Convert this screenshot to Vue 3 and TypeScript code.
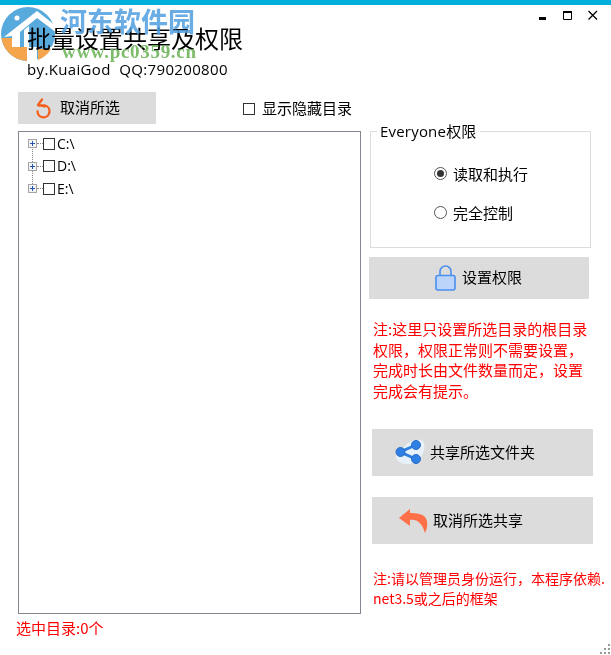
<template>
  <div class="window">
    <div class="accent"></div>

    <header class="head">
      <div class="titles">
        <h1>批量设置共享及权限</h1>
        <p>by.KuaiGod&nbsp; QQ:790200800</p>
      </div>
      <div class="controls">
        <svg width="12" height="12" viewBox="0 0 12 12"><rect x="2" y="8" width="7" height="3" fill="#000" /></svg>
        <svg width="12" height="12" viewBox="0 0 12 12"><path d="M1.500 2.500h8v8h-8z" fill="none" stroke="#000" /><rect x="1" y="2" width="9" height="2" fill="#000" /></svg>
        <svg width="12" height="12" viewBox="0 0 12 12"><path d="M1.500 2l8.500 8.500M10 2l-8.500 8.500" fill="none" stroke="#000" stroke-width="1.300" /></svg>
      </div>
    </header>

    <div class="toolbar">
      <button class="btn btn-top">
        <svg width="16" height="21" viewBox="0 0 16 21">
          <path d="M6 1.500L2 7l6.500 1.500M2.500 7.500H9a6 6 0 1 1-7.500 5.800" fill="none" stroke="#f4601c" stroke-width="2.300" stroke-linecap="round" stroke-linejoin="round" />
        </svg>
        <span>取消所选</span>
      </button>
      <label class="hidden-dirs"><span class="box"></span><span class="hidden-text">显示隐藏目录</span></label>
    </div>

    <main class="body">
      <section class="tree">
        <span class="vline"></span>
        <div v-for="d in drives" :key="d" class="node">
          <span class="plus"></span>
          <span class="dots"></span>
          <span class="box"></span>
          <span class="drive">{{ d }}</span>
        </div>
      </section>

      <aside class="side">
        <fieldset class="group">
          <legend>Everyone权限</legend>
          <div class="radios">
            <label class="radio"><span class="dot on"></span>读取和执行</label>
            <label class="radio"><span class="dot"></span>完全控制</label>
          </div>
        </fieldset>

        <button class="btn btn-perm">
          <svg width="21" height="26" viewBox="0 0 21 26">
            <path d="M5 11V6.500a5.500 5.500 0 0 1 11 0V11" fill="none" stroke="#4a8ef0" stroke-width="1.600" />
            <rect x="1" y="10.500" width="19" height="14.500" rx="2" fill="#bcd4fa" stroke="#4a8ef0" stroke-width="1.600" />
          </svg>
          <span>设置权限</span>
        </button>

        <p class="note note-a">注:这里只设置所选目录的根目录权限，权限正常则不需要设置，完成时长由文件数量而定，设置完成会有提示。</p>

        <button class="btn btn-share">
          <svg width="30" height="27" viewBox="0 0 30 27">
            <path d="M1 19C0 14 6 12 10 7c4-5 14-8 18-5 3 4 1 12-2 16-4 5-11 8-17 7-4-1-7-3-8-6z" fill="#e6f1fa" />
            <path d="M21 6L5 13l16 7" fill="none" stroke="#2f7fe0" stroke-width="3" />
            <circle cx="21" cy="6" r="4.500" fill="#2f80e4" stroke="#2a6cc4" />
            <circle cx="5.500" cy="13" r="4.500" fill="#2f80e4" stroke="#2a6cc4" />
            <circle cx="21" cy="20" r="4.500" fill="#2f80e4" stroke="#2a6cc4" />
          </svg>
          <span>共享所选文件夹</span>
        </button>

        <button class="btn btn-unshare">
          <svg width="29" height="24" viewBox="0 0 29 24">
            <path d="M11 0L0 9l11 8v-6c7-1 12 3 15 13 3-6 3-12 0-16-3-3-8-4-15-4z" fill="#ff7048" />
          </svg>
          <span>取消所选共享</span>
        </button>

        <p class="note note-b">注:请以管理员身份运行，本程序依赖.<br />net3.5或之后的框架</p>
      </aside>
    </main>

    <footer class="status">选中目录:0个</footer>
    <svg class="grip" width="12" height="12" viewBox="0 0 12 12" fill="#9a9a9a">
      <rect x="9" y="1" width="2" height="2" /><rect x="5" y="5" width="2" height="2" /><rect x="9" y="5" width="2" height="2" />
      <rect x="1" y="9" width="2" height="2" /><rect x="5" y="9" width="2" height="2" /><rect x="9" y="9" width="2" height="2" />
    </svg>

    <!-- watermark over the title -->
    <div class="mark">
      <svg class="mark-logo" width="62" height="64" viewBox="0 0 62 64">
        <circle cx="28" cy="34" r="27" fill="#58a9dc" />
        <path d="M27 47h10v16H27zM50 47h12v16H37v-3h13z" fill="#fff" />
        <path d="M1.500 38H14v9h13v14A27 27 0 0 1 1.500 38zM38 60V49h13a27 27 0 0 1-13 11z" fill="#f5a64d" />
        <path d="M4 37L37 11l24 19-4 3-20-15-17 14v15h-8V36z" fill="#fff" />
        <path d="M24 30l5-4v21h-5z" fill="#fff" />
        <circle cx="17" cy="18" r="2.500" fill="#fff" />
      </svg>
      <span class="mark-name">河东软件园</span>
      <span class="mark-url">www.pc0359.cn</span>
    </div>
  </div>
</template>

<script setup lang="ts">
const drives: string[] = ['C:\\', 'D:\\', 'E:\\']
</script>

<style>
html, body {
  margin: 0;
  background: #fff;
}
</style>

<style scoped>
.window {
  position: relative;
  width: 611px;
  height: 655px;
  overflow: hidden;
  background: #fff;
  color: #000;
  font-family: "Noto Sans CJK SC", "Noto Sans", sans-serif;
  font-size: 15px;
}

.accent {
  height: 5px;
  background: #00aedb;
}

.head {
  display: flex;
  justify-content: space-between;
  height: 87px;
}

.titles {
  padding: 16px 0 0 27px;
}

h1 {
  margin: 0;
  font-size: 24px;
  font-weight: 400;
  line-height: 34px;
}

.titles p {
  margin: 5px 0 0;
  font-family: "Open Sans", "Noto Sans CJK SC", sans-serif;
  font-size: 15px;
  letter-spacing: 0.35px;
  line-height: 19px;
}

.controls {
  display: flex;
  gap: 13px;
  padding: 4px 12px 0 0;
  height: 12px;
}

.toolbar {
  display: flex;
  align-items: center;
  height: 32px;
  padding-left: 18px;
}

.btn {
  display: flex;
  align-items: center;
  flex-shrink: 0;
  border: 0;
  padding: 0;
  background: #dcdcdc;
  color: #000;
  font: inherit;
}

.btn span {
  margin-bottom: 3px;
}

.btn-top {
  width: 138px;
  height: 32px;
  gap: 8px;
  padding-left: 18px;
}

.hidden-dirs {
  display: flex;
  align-items: center;
  gap: 7px;
  margin: 2px 0 0 87px;
}

.hidden-text {
  margin-bottom: 4px;
}

.box {
  display: inline-block;
  box-sizing: border-box;
  flex-shrink: 0;
  width: 12px;
  height: 12px;
  border: 1px solid #333;
  background: #fff;
}

.body {
  display: flex;
  margin-top: 7px;
  padding-left: 18px;
}

.tree {
  position: relative;
  flex-shrink: 0;
  box-sizing: border-box;
  width: 343px;
  height: 483px;
  border: 1px solid #828790;
  padding: 0.500px 0 0 9px;
}

.node {
  display: flex;
  align-items: center;
  height: 22.500px;
}

.plus {
  position: relative;
  box-sizing: border-box;
  width: 9px;
  height: 9px;
  border: 1px solid #a5a5a5;
  background: linear-gradient(#2454b8, #2454b8) center / 5px 1px no-repeat,
    linear-gradient(#2454b8, #2454b8) center / 1px 5px no-repeat, #f4f4f4;
}

.dots {
  width: 6px;
  border-top: 1px dotted #888;
}

.drive {
  margin-left: 2px;
  font-family: "Open Sans", "Noto Sans CJK SC", sans-serif;
  font-size: 14px;
  line-height: 18px;
}

.vline {
  position: absolute;
  left: 13px;
  top: 14px;
  height: 38px;
  border-left: 1px dotted #888;
}

.side {
  display: flex;
  flex-direction: column;
  align-items: flex-start;
  margin: -9px 0 0 8px;
}

.group {
  box-sizing: border-box;
  width: 221px;
  height: 126px;
  margin: 0 0 9px 1px;
  border: 1px solid #dcdcdc;
  padding: 0;
}

legend {
  margin-left: 6px;
  padding: 0 3px;
  font-family: "Open Sans", "Noto Sans CJK SC", sans-serif;
  font-size: 15px;
  letter-spacing: 0.2px;
  line-height: 19px;
}

.radios {
  padding: 22px 0 0 63px;
}

.radio {
  display: flex;
  align-items: center;
  gap: 6px;
  height: 20px;
  margin-bottom: 19px;
}

.dot {
  position: relative;
  box-sizing: border-box;
  width: 13px;
  height: 13px;
  border: 1px solid #555;
  border-radius: 50%;
  background: #fff;
}

.dot.on::after {
  content: "";
  position: absolute;
  inset: 2px;
  border-radius: 50%;
  background: #333;
}

.btn-perm {
  width: 220px;
  height: 42px;
  gap: 6px;
  padding-left: 66px;
}

.note {
  margin: 0;
  color: #f00;
  font-size: 15px;
}

.note-a {
  width: 216px;
  margin: 20px 0 0 4px;
  line-height: 20.500px;
}

.btn-share,
.btn-unshare {
  width: 221px;
  height: 47px;
  margin-left: 3px;
}

.btn-share {
  margin-top: 28px;
  gap: 5px;
  padding-left: 23px;
}

.btn-unshare {
  margin-top: 21px;
  gap: 5px;
  padding-left: 27px;
}

.note-b {
  margin: 24px 0 0 4px;
  font-size: 14px;
  line-height: 20px;
  white-space: nowrap;
}

.status {
  margin: 4px 0 0 16px;
  color: #f00;
  font-size: 15px;
  line-height: 20px;
}

.grip {
  position: absolute;
  right: 0;
  bottom: 0;
}

.mark {
  position: absolute;
  left: 0;
  top: 0;
  width: 300px;
  height: 70px;
  pointer-events: none;
}

.mark-logo {
  position: absolute;
  left: 0;
  top: 0;
  mix-blend-mode: multiply;
}

.mark-name {
  position: absolute;
  left: 60px;
  top: 3px;
  color: #4f9fe0;
  font-size: 27px;
  font-weight: 700;
  line-height: 36px;
  opacity: 0.85;
}

.mark-url {
  position: absolute;
  left: 62px;
  top: 42px;
  color: #6fb55c;
  font-family: "Liberation Serif", serif;
  font-size: 19px;
  font-weight: 700;
  line-height: 20px;
  letter-spacing: 0.7px;
  opacity: 0.9;
}
</style>
